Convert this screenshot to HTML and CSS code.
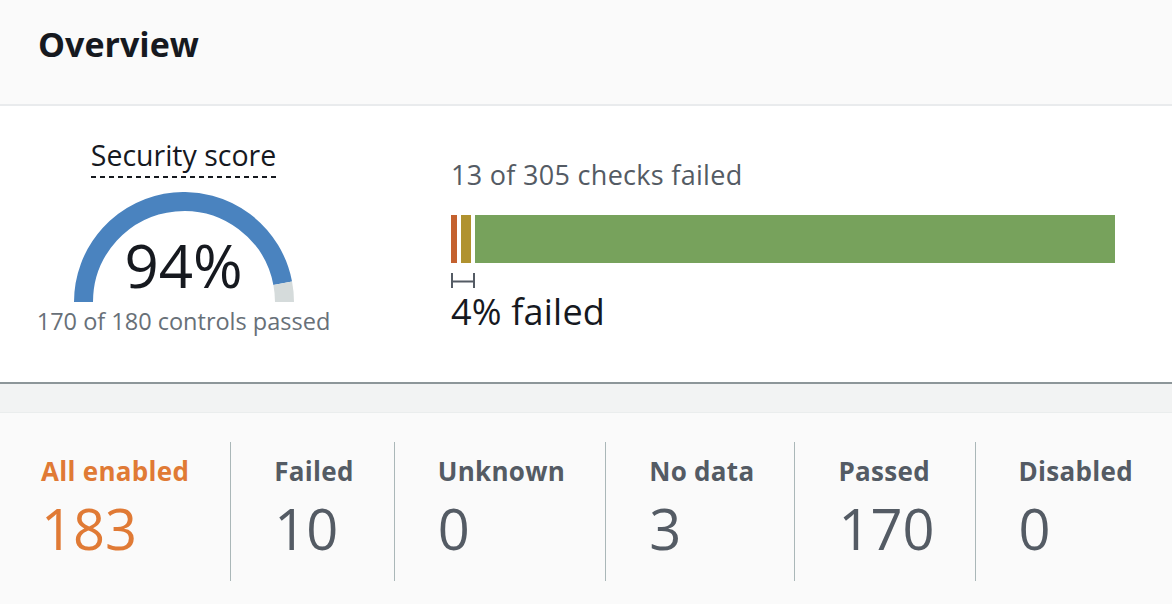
FILE: index.html
```html
<!DOCTYPE html>
<html lang="en">
<head>
<meta charset="utf-8">
<title>Overview</title>
<link rel="stylesheet" href="styles.css">
</head>
<body>
  <section class="panel">
    <header class="panel-header">
      <h2 class="panel-title">Overview</h2>
    </header>

    <div class="summary">
      <div class="score">
        <div class="score-label">Security score</div>
        <div class="gauge">
          <svg class="gauge-svg" width="220" height="110" viewBox="0 0 220 110" aria-hidden="true">
            <path d="M 9.5 110 A 100.5 100.5 0 0 1 208.72 91.17" fill="none" stroke="#4a83bf" stroke-width="19"/>
            <path d="M 208.72 91.17 A 100.5 100.5 0 0 1 210.5 110" fill="none" stroke="#d5dbdb" stroke-width="19"/>
          </svg>
          <div class="gauge-value">94%</div>
        </div>
        <div class="score-caption">170 of 180 controls passed</div>
      </div>

      <div class="checks">
        <div class="checks-title">13 of 305 checks failed</div>
        <div class="bar">
          <span class="seg seg-critical"></span>
          <span class="seg seg-medium"></span>
          <span class="seg seg-passed"></span>
        </div>
        <svg class="bracket" width="24" height="15" viewBox="0 0 24 15" aria-hidden="true">
          <path d="M1 0 V15 M23 0 V15 M1 8.5 H23" fill="none" stroke="#545b64" stroke-width="2"/>
        </svg>
        <div class="checks-failed">4% failed</div>
      </div>
    </div>

    <div class="band"></div>

    <div class="stats">
      <div class="stat stat-active">
        <div class="stat-label">All enabled</div>
        <div class="stat-value">183</div>
      </div>
      <div class="stat">
        <div class="stat-label">Failed</div>
        <div class="stat-value">10</div>
      </div>
      <div class="stat">
        <div class="stat-label">Unknown</div>
        <div class="stat-value">0</div>
      </div>
      <div class="stat">
        <div class="stat-label">No data</div>
        <div class="stat-value">3</div>
      </div>
      <div class="stat">
        <div class="stat-label">Passed</div>
        <div class="stat-value">170</div>
      </div>
      <div class="stat">
        <div class="stat-label">Disabled</div>
        <div class="stat-value">0</div>
      </div>
    </div>
  </section>
</body>
</html>
```

FILE: styles.css
```css
* { box-sizing: border-box; }

html, body {
  margin: 0;
  padding: 0;
  background: #fafafa;
  font-family: "Open Sans", "Noto Sans", "Liberation Sans", sans-serif;
  color: #16191f;
}

.panel {
  width: 1172px;
  height: 604px;
  overflow: hidden;
  display: flex;
  flex-direction: column;
}

.panel-header {
  height: 106px;
  flex: none;
  padding: 24px 38px 0;
  background: #fafafa;
  border-bottom: 2px solid #e9ebed;
}

.panel-title {
  margin: 0;
  font-size: 34px;
  line-height: 40px;
  font-weight: 700;
  color: #16191f;
}

.summary {
  height: 278px;
  flex: none;
  background: #ffffff;
  border-bottom: 2px solid #8d9699;
  display: flex;
}

.score {
  width: 367px;
  padding-top: 32px;
  display: flex;
  flex-direction: column;
  align-items: center;
}

.score-label {
  font-size: 28.5px;
  line-height: 34px;
  padding-bottom: 6px;
  color: #16191f;
  background-image: repeating-linear-gradient(to right, #16191f 0 5px, transparent 5px 9px);
  background-size: 100% 2px;
  background-position: left bottom;
  background-repeat: no-repeat;
}

.gauge {
  position: relative;
  width: 220px;
  height: 110px;
  margin-top: 14px;
}

.gauge-svg { display: block; }

.gauge-value {
  position: absolute;
  left: 0;
  right: 0;
  top: 43px;
  text-align: center;
  font-size: 60px;
  line-height: 60px;
  color: #16191f;
}

.score-caption {
  margin-top: 6px;
  font-size: 23.5px;
  line-height: 26px;
  color: #687078;
  white-space: nowrap;
}

.checks {
  flex: 1;
  padding: 53px 57px 0 84px;
  display: flex;
  flex-direction: column;
  align-items: flex-start;
}

.checks-title {
  font-size: 27px;
  line-height: 32px;
  letter-spacing: 0.3px;
  color: #545b64;
}

.bar {
  align-self: stretch;
  height: 48px;
  margin-top: 24px;
  display: flex;
  gap: 4px;
}

.seg { display: block; height: 100%; }
.seg-critical { width: 6px; background: #c4612f; }
.seg-medium { width: 10px; background: #b0922f; }
.seg-passed { flex: 1; background: #77a25c; }

.bracket {
  display: block;
  margin-top: 10px;
}

.checks-failed {
  margin-top: 4px;
  font-size: 36px;
  line-height: 40px;
  letter-spacing: 0.2px;
  color: #16191f;
}

.band {
  height: 29px;
  flex: none;
  background: #f2f3f3;
  border-bottom: 1px solid #eaeded;
}

.stats {
  flex: 1;
  background: #fafafa;
  display: flex;
  align-items: flex-start;
  padding-top: 29px;
}

.stat {
  height: 139px;
  padding: 14px 40px 0 43px;
  border-left: 1px solid #aab7b8;
}

.stat:first-child {
  border-left: none;
  padding-left: 41px;
  padding-right: 41px;
}

.stat-label {
  font-size: 26px;
  line-height: 30px;
  font-weight: 700;
  letter-spacing: 0.3px;
  color: #545b64;
  white-space: nowrap;
}

.stat-value {
  margin-top: 10px;
  font-size: 56px;
  line-height: 64px;
  color: #545b64;
}

.stat-active .stat-label,
.stat-active .stat-value {
  color: #e07a35;
}
```
